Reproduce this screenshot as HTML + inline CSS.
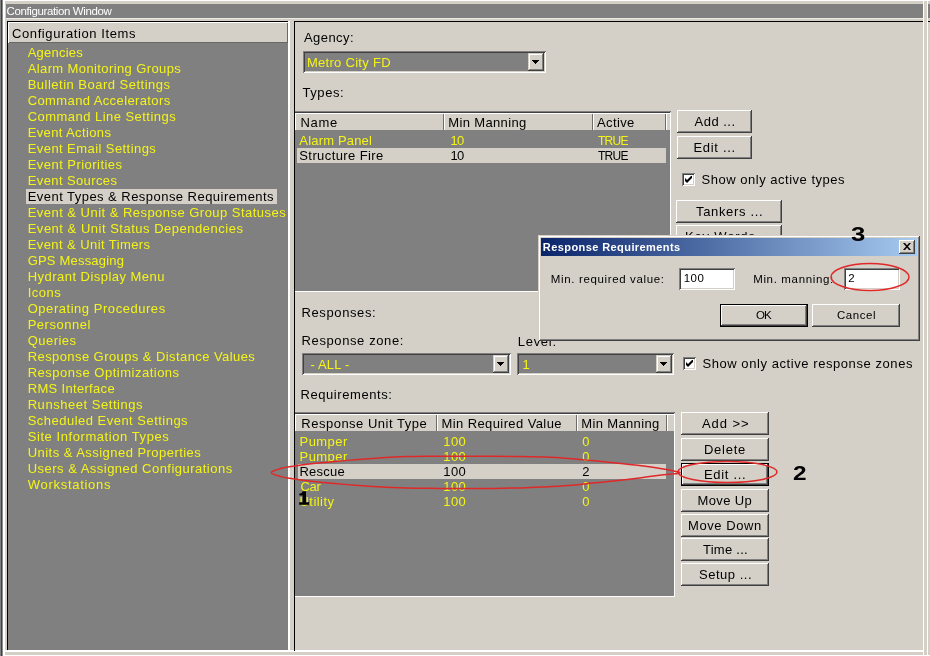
<!DOCTYPE html>
<html><head><meta charset="utf-8"><title>Configuration Window</title>
<style>
html,body{margin:0;padding:0}
body{width:930px;height:656px;overflow:hidden;background:#d4d0c8;font-family:"Liberation Sans",sans-serif;font-size:13px;position:relative}
div,span{box-sizing:border-box}
.a{position:absolute}
.t{position:absolute;white-space:pre;line-height:16px;height:16px}
.b{position:absolute;background:#d4d0c8;text-align:center;white-space:pre;color:#000;
   box-shadow:inset -1px -1px 0 #404040,inset 1px 1px 0 #fff,inset -2px -2px 0 #808080,inset 2px 2px 0 #d4d0c8}
.b.def{box-shadow:inset 0 0 0 1px #000,inset -2px -2px 0 #404040,inset 2px 2px 0 #fff,inset -3px -3px 0 #808080}
.hd{position:absolute;background:#d4d0c8;box-shadow:inset 0 1px 0 #fff,inset 1px 0 0 #fff,inset -1px 0 0 #6c6c6c}
.hdl{position:absolute;background:#d4d0c8;box-shadow:inset 1px 1px 0 #fff,inset -1px -1px 0 #686868}
.sunk{position:absolute;box-shadow:inset 1px 1px 0 #808080,inset -1px -1px 0 #fff,inset 2px 2px 0 #404040,inset -2px -2px 0 #d4d0c8}
.cbtn{position:absolute;background:#d4d0c8;box-shadow:inset -1px -1px 0 #404040,inset 1px 1px 0 #d4d0c8,inset -2px -2px 0 #808080,inset 2px 2px 0 #fff}
.dg{font-size:19.5px;font-weight:bold;line-height:24px;height:24px;color:#000;transform:scaleX(1.2);transform-origin:0 0}
.arrow{position:absolute;width:0;height:0;border-left:4px solid transparent;border-right:4px solid transparent;border-top:4px solid #000}
.chk{position:absolute;width:13px;height:13px;background:#fff;box-shadow:inset 1px 1px 0 #808080,inset -1px -1px 0 #fff,inset 2px 2px 0 #404040,inset -2px -2px 0 #d4d0c8}
</style></head><body><div id="w" style="position:absolute;left:0;top:0;width:930px;height:656px;overflow:hidden;will-change:transform;opacity:0.999">


<!-- outer frame -->
<div class="a" style="left:0;top:0;width:930px;height:1px;background:#fff"></div>
<div class="a" style="left:0;top:0;width:1px;height:656px;background:#808080"></div>
<div class="a" style="left:1px;top:0;width:1px;height:656px;background:#404040"></div>
<div class="a" style="left:2px;top:0;width:1px;height:656px;background:#8c8c8c"></div>
<div class="a" style="left:3px;top:0;width:2px;height:656px;background:#fff"></div>
<!-- title bar -->
<div class="a" style="left:6px;top:4px;width:917px;height:14px;background:#808080"></div>
<div class="a" style="left:928px;top:4px;width:2px;height:14px;background:#808080"></div>
<div class="a" style="left:6px;top:18px;width:917px;height:1px;background:#eceae4"></div>
<!-- right edge lines -->
<div class="a" style="left:923px;top:0;width:1px;height:656px;background:#fff"></div>
<div class="a" style="left:927px;top:0;width:1px;height:656px;background:#fff"></div>
<div class="a" style="left:928px;top:21px;width:2px;height:1px;background:#000"></div>
<!-- bottom lines -->
<div class="a" style="left:5px;top:650px;width:919px;height:2px;background:#fff"></div>
<div class="a" style="left:3px;top:655px;width:927px;height:1px;background:#fff"></div>
<!-- left panel -->
<div class="a" style="left:7px;top:21px;width:281px;height:629px;background:#808080;border-left:1px solid #000;border-top:1px solid #000"></div>
<div class="hdl" style="left:8px;top:22px;width:280px;height:21px"></div>
<div class="a" style="left:288px;top:21px;width:2px;height:629px;background:#fff"></div>
<div class="a" style="left:26px;top:189px;width:251px;height:15px;background:#d4d0c8"></div>
<!-- right panel border -->
<div class="a" style="left:294px;top:21px;width:629px;height:1px;background:#000"></div>
<div class="a" style="left:294px;top:21px;width:1px;height:630px;background:#000"></div>

<div class='a' style='left:303px;top:51px;width:243px;height:22px;background:#808080'></div><div class='sunk' style='left:303px;top:51px;width:243px;height:22px'></div><div class='cbtn' style='left:528px;top:53px;width:16px;height:18px'></div><svg class='a' style='left:532px;top:60px' width='7' height='4' viewBox='0 0 7 4' shape-rendering='crispEdges'><path d='M0 0h7v1h-1v1h-1v1h-1v1h-1v-1h-1v-1h-1v-1h-1z' fill='#000'/></svg>
<div class='a' style='left:302px;top:353px;width:209px;height:22px;background:#808080'></div><div class='sunk' style='left:302px;top:353px;width:209px;height:22px'></div><div class='cbtn' style='left:493px;top:355px;width:16px;height:18px'></div><svg class='a' style='left:497px;top:362px' width='7' height='4' viewBox='0 0 7 4' shape-rendering='crispEdges'><path d='M0 0h7v1h-1v1h-1v1h-1v1h-1v-1h-1v-1h-1v-1h-1z' fill='#000'/></svg>
<div class='a' style='left:517px;top:353px;width:157px;height:22px;background:#808080'></div><div class='sunk' style='left:517px;top:353px;width:157px;height:22px'></div><div class='cbtn' style='left:656px;top:355px;width:16px;height:18px'></div><svg class='a' style='left:660px;top:362px' width='7' height='4' viewBox='0 0 7 4' shape-rendering='crispEdges'><path d='M0 0h7v1h-1v1h-1v1h-1v1h-1v-1h-1v-1h-1v-1h-1z' fill='#000'/></svg>

<div class="a" style="left:295px;top:111px;width:376px;height:181px;background:#808080;border-top:2px solid #404040;border-right:1px solid #fff;border-bottom:1px solid #fff"></div><div class="a" style="left:295px;top:111px;width:375px;height:1px;background:#808080"></div>
<div class="hd" style="left:295px;top:113px;width:149px;height:17px"></div>
<div class="hd" style="left:444px;top:113px;width:149px;height:17px"></div>
<div class="hd" style="left:593px;top:113px;width:73px;height:17px"></div>
<div class="a" style="left:666px;top:113px;width:4px;height:17px;background:#d4d0c8;box-shadow:inset 0 1px 0 #fff,inset 1px 0 0 #fff"></div>
<div class="a" style="left:297px;top:148px;width:369px;height:15px;background:#d4d0c8"></div>


<div class="a" style="left:295px;top:412px;width:380px;height:185px;background:#808080;border-top:2px solid #404040;border-right:1px solid #fff;border-bottom:1px solid #fff"></div><div class="a" style="left:295px;top:412px;width:379px;height:1px;background:#808080"></div>
<div class="hd" style="left:295px;top:414px;width:142px;height:17px"></div>
<div class="hd" style="left:437px;top:414px;width:140px;height:17px"></div>
<div class="hd" style="left:577px;top:414px;width:90px;height:17px"></div>
<div class="a" style="left:667px;top:414px;width:7px;height:17px;background:#d4d0c8;box-shadow:inset 0 1px 0 #fff,inset 1px 0 0 #fff"></div>
<div class="a" style="left:298px;top:464px;width:368px;height:15px;background:#d4d0c8"></div>

<div class='chk' style='left:682px;top:173px'><svg class='a' style='left:3px;top:3px' width='7' height='7' viewBox='0 0 7 7'><path d='M0 2v3l2 2 5-5v-3l-5 5z' fill='#000'/></svg></div>
<div class='chk' style='left:683px;top:357px'><svg class='a' style='left:3px;top:3px' width='7' height='7' viewBox='0 0 7 7'><path d='M0 2v3l2 2 5-5v-3l-5 5z' fill='#000'/></svg></div>
<div class='b' style='left:677px;top:110px;width:75px;height:23px;line-height:24px;font-size:13px;letter-spacing:0.51px;text-indent:1.12px'>Add ...</div>
<div class='b' style='left:677px;top:136px;width:75px;height:23px;line-height:24px;font-size:13px;letter-spacing:0.68px;text-indent:0.29px'>Edit ...</div>
<div class='b' style='left:676px;top:200px;width:106px;height:23px;line-height:24px;font-size:13px;letter-spacing:0.66px;text-indent:1.28px'>Tankers ...</div>
<div class='b' style='left:676px;top:225px;width:106px;height:23px;line-height:24px;font-size:13px;letter-spacing:0.82px;text-indent:0.43px'>Key Words ...</div>
<div class='b' style='left:681px;top:412px;width:88px;height:23px;line-height:24px;font-size:13px;letter-spacing:0.93px;text-indent:1.52px'>Add &gt;&gt;</div>
<div class='b' style='left:681px;top:438px;width:88px;height:23px;line-height:24px;font-size:13px;letter-spacing:0.73px;text-indent:-0.04px'>Delete</div>
<div class='b def' style='left:681px;top:463px;width:88px;height:23px;line-height:24px;font-size:13px;letter-spacing:0.68px;text-indent:0.29px'>Edit ...</div>
<div class='b' style='left:681px;top:489px;width:88px;height:23px;line-height:24px;font-size:13px;letter-spacing:0.37px;text-indent:-0.40px'>Move Up</div>
<div class='b' style='left:681px;top:514px;width:88px;height:23px;line-height:24px;font-size:13px;letter-spacing:0.57px;text-indent:-0.20px'>Move Down</div>
<div class='b' style='left:681px;top:538px;width:88px;height:23px;line-height:24px;font-size:13px;letter-spacing:0.25px;text-indent:0.86px'>Time ...</div>
<div class='b' style='left:681px;top:563px;width:88px;height:23px;line-height:24px;font-size:13px;letter-spacing:0.52px;text-indent:1.14px'>Setup ...</div>
<span class='t' style='left:6.5px;top:2.5px;font-size:11.5px;color:#fff;letter-spacing:-0.38px;'>Configuration Window</span>
<span class='t' style='left:12.0px;top:26.0px;font-size:13px;color:#000;letter-spacing:0.60px;'>Configuration Items</span>
<span class='t' style='left:27.7px;top:45.0px;font-size:13px;color:#f4f418;letter-spacing:0.22px;'>Agencies</span>
<span class='t' style='left:27.7px;top:61.0px;font-size:13px;color:#f4f418;letter-spacing:0.39px;'>Alarm Monitoring Groups</span>
<span class='t' style='left:27.7px;top:77.0px;font-size:13px;color:#f4f418;letter-spacing:0.49px;'>Bulletin Board Settings</span>
<span class='t' style='left:27.7px;top:93.0px;font-size:13px;color:#f4f418;letter-spacing:0.39px;'>Command Accelerators</span>
<span class='t' style='left:27.7px;top:109.0px;font-size:13px;color:#f4f418;letter-spacing:0.46px;'>Command Line Settings</span>
<span class='t' style='left:27.7px;top:125.0px;font-size:13px;color:#f4f418;letter-spacing:0.37px;'>Event Actions</span>
<span class='t' style='left:27.7px;top:141.0px;font-size:13px;color:#f4f418;letter-spacing:0.43px;'>Event Email Settings</span>
<span class='t' style='left:27.7px;top:157.0px;font-size:13px;color:#f4f418;letter-spacing:0.46px;'>Event Priorities</span>
<span class='t' style='left:27.7px;top:173.0px;font-size:13px;color:#f4f418;letter-spacing:0.39px;'>Event Sources</span>
<span class='t' style='left:27.7px;top:189.0px;font-size:13px;color:#000;letter-spacing:0.46px;'>Event Types &amp; Response Requirements</span>
<span class='t' style='left:27.7px;top:205.0px;font-size:13px;color:#f4f418;letter-spacing:0.47px;'>Event &amp; Unit &amp; Response Group Statuses</span>
<span class='t' style='left:27.7px;top:221.0px;font-size:13px;color:#f4f418;letter-spacing:0.51px;'>Event &amp; Unit Status Dependencies</span>
<span class='t' style='left:27.7px;top:237.0px;font-size:13px;color:#f4f418;letter-spacing:0.42px;'>Event &amp; Unit Timers</span>
<span class='t' style='left:27.7px;top:253.0px;font-size:13px;color:#f4f418;letter-spacing:0.19px;'>GPS Messaging</span>
<span class='t' style='left:27.7px;top:269.0px;font-size:13px;color:#f4f418;letter-spacing:0.47px;'>Hydrant Display Menu</span>
<span class='t' style='left:27.7px;top:285.0px;font-size:13px;color:#f4f418;letter-spacing:0.48px;'>Icons</span>
<span class='t' style='left:27.7px;top:301.0px;font-size:13px;color:#f4f418;letter-spacing:0.54px;'>Operating Procedures</span>
<span class='t' style='left:27.7px;top:317.0px;font-size:13px;color:#f4f418;letter-spacing:0.51px;'>Personnel</span>
<span class='t' style='left:27.7px;top:333.0px;font-size:13px;color:#f4f418;letter-spacing:0.46px;'>Queries</span>
<span class='t' style='left:27.7px;top:349.0px;font-size:13px;color:#f4f418;letter-spacing:0.42px;'>Response Groups &amp; Distance Values</span>
<span class='t' style='left:27.7px;top:365.0px;font-size:13px;color:#f4f418;letter-spacing:0.50px;'>Response Optimizations</span>
<span class='t' style='left:27.7px;top:381.0px;font-size:13px;color:#f4f418;letter-spacing:0.32px;'>RMS Interface</span>
<span class='t' style='left:27.7px;top:397.0px;font-size:13px;color:#f4f418;letter-spacing:0.54px;'>Runsheet Settings</span>
<span class='t' style='left:27.7px;top:413.0px;font-size:13px;color:#f4f418;letter-spacing:0.48px;'>Scheduled Event Settings</span>
<span class='t' style='left:27.7px;top:429.0px;font-size:13px;color:#f4f418;letter-spacing:0.57px;'>Site Information Types</span>
<span class='t' style='left:27.7px;top:445.0px;font-size:13px;color:#f4f418;letter-spacing:0.46px;'>Units &amp; Assigned Properties</span>
<span class='t' style='left:27.7px;top:461.0px;font-size:13px;color:#f4f418;letter-spacing:0.48px;'>Users &amp; Assigned Configurations</span>
<span class='t' style='left:27.7px;top:477.0px;font-size:13px;color:#f4f418;letter-spacing:0.72px;'>Workstations</span>
<span class='t' style='left:304.0px;top:29.5px;font-size:13px;color:#000;letter-spacing:0.44px;'>Agency:</span>
<span class='t' style='left:307.0px;top:55.0px;font-size:13px;color:#f4f418;letter-spacing:0.28px;'>Metro City FD</span>
<span class='t' style='left:302.5px;top:85.0px;font-size:13px;color:#000;letter-spacing:0.56px;'>Types:</span>
<span class='t' style='left:300.5px;top:114.5px;font-size:13px;color:#000;letter-spacing:0.68px;'>Name</span>
<span class='t' style='left:448.3px;top:114.5px;font-size:13px;color:#000;letter-spacing:0.35px;'>Min Manning</span>
<span class='t' style='left:597.0px;top:114.5px;font-size:13px;color:#000;letter-spacing:0.37px;'>Active</span>
<span class='t' style='left:299.3px;top:133.0px;font-size:13px;color:#f4f418;letter-spacing:0.18px;'>Alarm Panel</span>
<span class='t' style='left:450.4px;top:133.0px;font-size:13px;color:#f4f418;letter-spacing:-0.63px;'>10</span>
<span class='t' style='left:598.0px;top:133.3px;font-size:12px;color:#f4f418;letter-spacing:-0.72px;'>TRUE</span>
<span class='t' style='left:299.3px;top:148.0px;font-size:13px;color:#000;letter-spacing:0.40px;'>Structure Fire</span>
<span class='t' style='left:450.4px;top:148.0px;font-size:13px;color:#000;letter-spacing:-0.63px;'>10</span>
<span class='t' style='left:598.0px;top:148.3px;font-size:12px;color:#000;letter-spacing:-0.72px;'>TRUE</span>
<span class='t' style='left:701.6px;top:171.6px;font-size:13px;color:#000;letter-spacing:0.51px;'>Show only active types</span>
<span class='t' style='left:301.5px;top:304.6px;font-size:13px;color:#000;letter-spacing:0.61px;'>Responses:</span>
<span class='t' style='left:301.6px;top:332.6px;font-size:13px;color:#000;letter-spacing:0.60px;'>Response zone:</span>
<span class='t' style='left:517.7px;top:333.6px;font-size:13px;color:#000;letter-spacing:0.74px;'>Level:</span>
<span class='t' style='left:310.4px;top:357.2px;font-size:13px;color:#f4f418;letter-spacing:0.19px;'>- ALL -</span>
<span class='t' style='left:522.5px;top:357.2px;font-size:13px;color:#f4f418;letter-spacing:0.00px;'>1</span>
<span class='t' style='left:702.4px;top:356.2px;font-size:13px;color:#000;letter-spacing:0.57px;'>Show only active response zones</span>
<span class='t' style='left:300.5px;top:386.5px;font-size:13px;color:#000;letter-spacing:0.57px;'>Requirements:</span>
<span class='t' style='left:301.3px;top:415.5px;font-size:13px;color:#000;letter-spacing:0.50px;'>Response Unit Type</span>
<span class='t' style='left:441.5px;top:415.5px;font-size:13px;color:#000;letter-spacing:0.40px;'>Min Required Value</span>
<span class='t' style='left:581.3px;top:415.5px;font-size:13px;color:#000;letter-spacing:0.35px;'>Min Manning</span>
<span class='t' style='left:299.5px;top:434.0px;font-size:13px;color:#f4f418;letter-spacing:0.46px;'>Pumper</span>
<span class='t' style='left:443.3px;top:434.0px;font-size:13px;color:#f4f418;letter-spacing:0.37px;'>100</span>
<span class='t' style='left:582.3px;top:434.0px;font-size:13px;color:#f4f418;letter-spacing:0.00px;'>0</span>
<span class='t' style='left:299.5px;top:448.5px;font-size:13px;color:#f4f418;letter-spacing:0.46px;clip-path:inset(0 0 2.6px 0);'>Pumper</span>
<span class='t' style='left:443.3px;top:448.5px;font-size:13px;color:#f4f418;letter-spacing:0.37px;clip-path:inset(0 0 2.6px 0);'>100</span>
<span class='t' style='left:582.3px;top:448.5px;font-size:13px;color:#f4f418;letter-spacing:0.00px;clip-path:inset(0 0 2.6px 0);'>0</span>
<span class='t' style='left:299.5px;top:464.0px;font-size:13px;color:#000;letter-spacing:0.23px;'>Rescue</span>
<span class='t' style='left:443.3px;top:464.0px;font-size:13px;color:#000;letter-spacing:0.37px;'>100</span>
<span class='t' style='left:582.3px;top:464.0px;font-size:13px;color:#000;letter-spacing:0.00px;'>2</span>
<span class='t' style='left:300.5px;top:478.5px;font-size:13px;color:#f4f418;letter-spacing:-0.31px;'>Car</span>
<span class='t' style='left:443.3px;top:478.5px;font-size:13px;color:#f4f418;letter-spacing:0.37px;'>100</span>
<span class='t' style='left:582.3px;top:478.5px;font-size:13px;color:#f4f418;letter-spacing:0.00px;'>0</span>
<span class='t' style='left:299.5px;top:494.0px;font-size:13px;color:#f4f418;letter-spacing:0.45px;'>Utility</span>
<span class='t' style='left:443.3px;top:494.0px;font-size:13px;color:#f4f418;letter-spacing:0.37px;'>100</span>
<span class='t' style='left:582.3px;top:494.0px;font-size:13px;color:#f4f418;letter-spacing:0.00px;'>0</span>

<svg class="a" style="left:0;top:0" width="930" height="656" viewBox="0 0 930 656">
<path d="M271.1 472.5C271.1 471.9 272.5 471.3 274.0 470.7C275.5 470.1 277.7 469.3 280.0 468.7C282.3 468.1 282.5 467.8 287.7 467.0C292.9 466.2 303.4 464.6 311.3 463.7C319.2 462.8 327.1 462.1 335.0 461.4C342.9 460.7 350.7 460.1 358.6 459.5C366.5 458.9 374.4 458.3 382.3 457.8C390.2 457.3 398.1 456.9 406.0 456.6C413.9 456.3 418.3 456.3 429.6 456.2C440.9 456.1 458.8 456.1 474.0 456.2C489.2 456.2 509.2 456.4 521.0 456.5C532.8 456.6 537.1 456.8 545.0 457.1C552.9 457.4 560.7 457.9 568.6 458.5C576.5 459.1 584.4 459.9 592.3 460.6C600.2 461.4 608.1 462.2 616.0 463.0C623.9 463.8 631.7 464.6 639.6 465.6C647.5 466.6 657.0 468.0 663.3 469.0C669.6 470.0 674.7 471.2 677.5 471.8C680.3 472.4 680.0 472.3 680.0 472.6C680.0 472.9 680.3 473.0 677.5 473.4C674.7 473.8 669.6 474.1 663.3 474.8C657.0 475.6 647.5 476.9 639.6 477.9C631.7 478.9 623.9 479.9 616.0 480.8C608.1 481.7 600.2 482.3 592.3 483.1C584.4 483.9 576.5 484.9 568.6 485.5C560.7 486.1 552.9 486.5 545.0 486.9C537.1 487.3 532.8 487.6 521.0 487.9C509.2 488.2 489.2 488.5 474.0 488.6C458.8 488.7 440.9 488.4 429.6 488.3C418.3 488.2 413.9 488.1 406.0 487.9C398.1 487.7 390.2 487.5 382.3 487.1C374.4 486.7 366.5 486.1 358.6 485.5C350.7 484.9 342.9 484.3 335.0 483.6C327.1 482.9 319.2 482.1 311.3 481.2C303.4 480.2 292.9 478.7 287.7 477.9C282.5 477.1 282.3 476.9 280.0 476.3C277.7 475.7 275.5 475.0 274.0 474.4C272.5 473.8 271.1 473.1 271.1 472.5Z" fill="none" stroke="#e02828" stroke-width="1.5"/>
<ellipse cx="727.5" cy="472" rx="49.5" ry="10.5" fill="none" stroke="#e02828" stroke-width="1.5"/>
</svg>
<svg class="a" style="left:299px;top:491px" width="10" height="14" viewBox="0 0 10 13.6"><path d="M3.6 0H7V11.1H10V13.6H0.2V11.1H3.6V4.3H0.4V2.3C2.2 2.3 3.4 1.5 3.6 0Z" fill="#000"/></svg>
<span class="t dg" style="left:793px;top:460.5px;transform:scaleX(1.25)">2</span>


<div class="a" style="left:538px;top:235px;width:382px;height:106px;background:#d4d0c8;box-shadow:inset 1px 1px 0 #d4d0c8,inset -1px -1px 0 #404040,inset 2px 2px 0 #fff,inset -2px -2px 0 #808080"></div>
<div class="a" style="left:541px;top:238px;width:376px;height:18px;background:linear-gradient(to right,#0a246a,#a6caf0)"></div>
<div class="b" style="left:899px;top:240px;width:16px;height:14px"></div>
<svg class="a" style="left:903px;top:243px" width="8" height="7" viewBox="0 0 8 7"><path d="M0 0h2l6 7h-2z M6 0h2l-6 7h-2z" fill="#000"/></svg>
<div class="a" style="left:679px;top:268px;width:56px;height:22px;background:#fff"></div><div class="sunk" style="left:679px;top:268px;width:56px;height:22px"></div>
<div class="a" style="left:844px;top:268px;width:56px;height:22px;background:#fff"></div><div class="sunk" style="left:844px;top:268px;width:56px;height:22px"></div>

<div class='b def' style='left:720px;top:304px;width:88px;height:23px;line-height:22px;font-size:11.5px;letter-spacing:-0.95px;text-indent:-1.27px'>OK</div>
<div class='b' style='left:812px;top:304px;width:88px;height:23px;line-height:22px;font-size:11.5px;letter-spacing:0.55px;text-indent:1.11px'>Cancel</div>
<span class='t' style='left:542.8px;top:238.8px;font-size:11px;color:#fff;letter-spacing:0.42px;font-weight:bold;'>Response Requirements</span>
<span class='t' style='left:550.8px;top:270.5px;font-size:11.5px;color:#000;letter-spacing:0.64px;'>Min. required value:</span>
<span class='t' style='left:753.2px;top:270.5px;font-size:11.5px;color:#000;letter-spacing:0.65px;'>Min. manning:</span>
<span class='t' style='left:683.7px;top:270.2px;font-size:11.5px;color:#000;letter-spacing:0.45px;'>100</span>
<span class='t' style='left:848.3px;top:270.2px;font-size:11.5px;color:#000;letter-spacing:0.00px;'>2</span>

<svg class="a" style="left:0;top:0" width="930" height="656" viewBox="0 0 930 656">
<ellipse cx="870" cy="277" rx="39" ry="13.5" fill="none" stroke="#e02828" stroke-width="1.5"/>
</svg>
<span class="t dg" style="left:850.5px;top:222px;transform:scaleX(1.32)">3</span>

</div></body></html>
